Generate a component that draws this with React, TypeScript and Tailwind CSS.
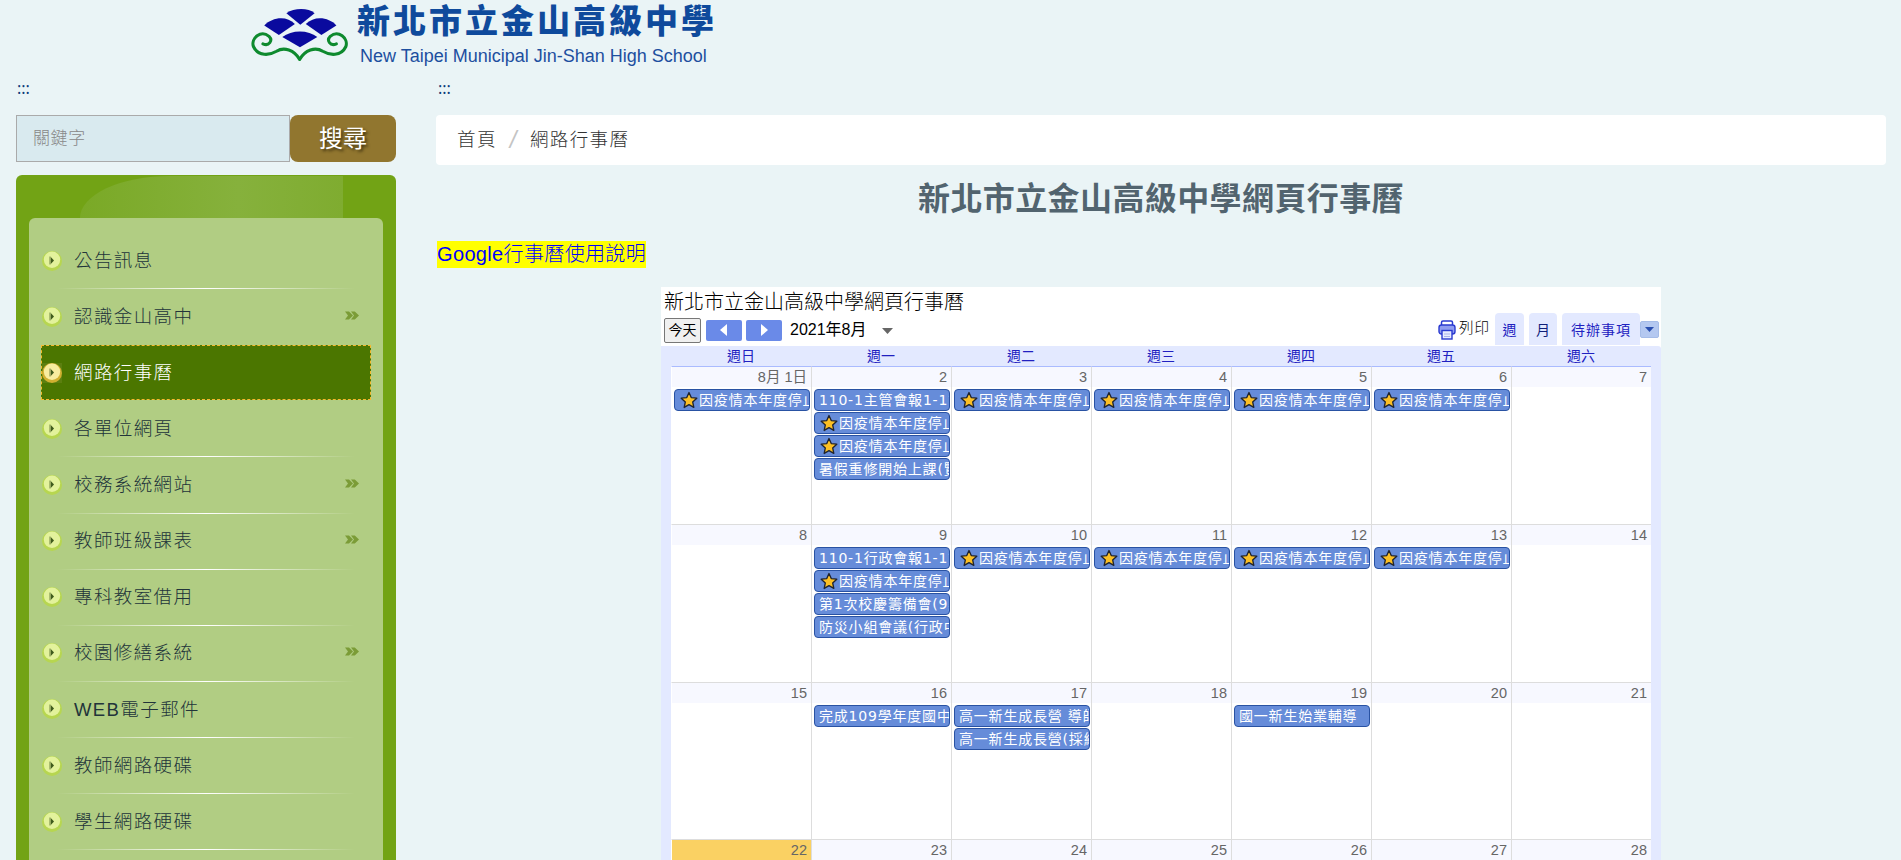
import React from "react";

const cjk = "font-['Liberation_Sans','Noto_Sans_CJK_TC',sans-serif]";
const evFont = "font-['DejaVu_Sans','Noto_Sans_CJK_TC',sans-serif]";

function Logo() {
  return (
    <div className="flex items-start pl-[250px] h-[72px]">
      <svg width="102" height="60" viewBox="0 0 300 168" className="mt-[7px] shrink-0">
        <path d="M107 14 C130 -2 172 -2 190 14 L148 48 Z" fill="#0a0a9e" />
        <path d="M42 50 C65 26 108 20 132 46 L85 78 Z" fill="#0a0a9e" />
        <path d="M164 46 C190 20 232 26 254 50 L210 78 Z" fill="#0a0a9e" />
        <path d="M95 84 C122 62 172 62 198 84 L147 114 Z" fill="#0a0a9e" />
        <path
          d="M146 150 C130 122 100 112 78 126 C58 138 24 142 10 112 C2 88 32 62 56 82 C68 94 56 112 38 104 M146 150 C162 122 192 112 214 126 C234 138 268 142 282 112 C290 88 260 62 236 82 C224 94 236 112 254 104"
          fill="none"
          stroke="#0e8a2e"
          strokeWidth="9"
          strokeLinecap="round"
        />
      </svg>
      <div className="ml-[5px] flex flex-col pt-[2px]">
        <div className={`${cjk} text-[33px] leading-[40px] font-black tracking-[3px] text-[#0f4a9c] whitespace-nowrap`}>新北市立金山高級中學</div>
        <div className="font-['Liberation_Sans',sans-serif] text-[18px] leading-[22px] text-[#1d4f9f] ml-[3px] mt-[3px] whitespace-nowrap">New Taipei Municipal Jin-Shan High School</div>
      </div>
    </div>
  );
}

function Bullet({ active }: { active?: boolean }) {
  const outer = active ? "#d0b030" : "#b7d650";
  const mid = active ? "#f8eda0" : "#e3f29c";
  return (
    <svg width="20" height="20" viewBox="0 0 20 20" className="shrink-0">
      {active && <rect x="0" y="0" width="20" height="20" fill="#5c7f10" />}
      <circle cx="10" cy="10" r="10" fill={outer} />
      <circle cx="10" cy="8.7" r="8.2" fill={mid} />
      <path d="M8.8 6 L12 9.5 L8.8 13 Z" fill="#3f5a1c" />
      <path d="M8 5.5 V13.5" stroke="#3f5a1c" strokeWidth="0.7" />
    </svg>
  );
}

function Chevron() {
  return (
    <svg width="14" height="9" viewBox="0 0 14 9" className="shrink-0 mb-[3px]">
      <path d="M0 0.5 H4 L8 4.5 L4 8.5 H0 L3 4.5 Z M6 0.5 H9.8 L14 4.5 L9.8 8.5 H6 L9 4.5 Z" fill="#7b9c37" />
    </svg>
  );
}

const menu: { t: string; more?: boolean; active?: boolean; noLine?: boolean }[] = [
  { t: "公告訊息" },
  { t: "認識金山高中", more: true, noLine: true },
  { t: "網路行事曆", active: true, noLine: true },
  { t: "各單位網頁" },
  { t: "校務系統網站", more: true },
  { t: "教師班級課表", more: true },
  { t: "專科教室借用" },
  { t: "校園修繕系統", more: true },
  { t: "WEB電子郵件" },
  { t: "教師網路硬碟" },
  { t: "學生網路硬碟" },
];

function Sidebar() {
  return (
    <div className="w-[380px] shrink-0">
      <div className="h-[43px] pt-[6px] text-[16px] leading-[20px] text-[#0a3a7a] pl-[1px]">:::</div>
      <div className="flex h-[47px]">
        <div className={`${cjk} font-light w-[274px] border border-[#aaaaaa] bg-[#d9eaef] pl-[16px] flex items-center text-[17px] tracking-[0.6px] text-[#888888]`}>關鍵字</div>
        <div className={`${cjk} flex-1 rounded-[8px] bg-[#91762f] text-white text-[24px] flex items-center justify-center [text-shadow:2px_2px_3px_#3f3210]`}>搜尋</div>
      </div>
      <div className="relative mt-[13px] rounded-[6px] bg-[#72a315] px-[13px] pt-[43px]">
        <div className="absolute left-[64px] top-[1px] w-[263px] h-[42px] rounded-tl-[90px_42px] bg-[linear-gradient(90deg,#7aa926,#86b13c_60%,#7fac30)]" />
        <div className="relative rounded-[6px] bg-[#b1cd83] pt-[15px] px-[12px] pb-[40px]">
          {menu.map((m) => (
            <div key={m.t}>
              <div
                className={`${cjk} font-light flex items-center h-[55.12px] text-[18.5px] tracking-[1.4px] ${
                  m.active ? "border border-dashed border-[#f5b82e] bg-[#4b7600] text-white" : "border border-transparent text-[#22343a]"
                }`}
              >
                <Bullet active={m.active} />
                <span className="ml-[12px] flex-1">{m.t}</span>
                {m.more && <span className="mr-[11px] flex"><Chevron /></span>}
              </div>
              <div
                className={`h-[1px] mx-[16px] ${
                  m.noLine ? "" : "bg-[linear-gradient(90deg,transparent,#ffffff_50%,transparent)]"
                }`}
              />
            </div>
          ))}
        </div>
      </div>
    </div>
  );
}

function Star() {
  return (
    <svg width="18" height="18" viewBox="0 0 24 24" className="shrink-0 mr-[1px]">
      <path
        d="M12 2 L15 8.8 L22.4 9.6 L16.9 14.6 L18.4 21.9 L12 18.2 L5.6 21.9 L7.1 14.6 L1.6 9.6 L9 8.8 Z"
        fill="#fbbf24"
        stroke="#1f2430"
        strokeWidth="1.8"
        strokeLinejoin="round"
      />
    </svg>
  );
}

type Ev = { t: string; star?: boolean };
const S: Ev = { t: "因疫情本年度停止上班", star: true };

const weeks: { d: string; ev?: Ev[]; today?: boolean }[][] = [
  [
    { d: "8月 1日", ev: [S] },
    { d: "2", ev: [{ t: "110-1主管會報1-1節" }, S, S, { t: "暑假重修開始上課(覽" }] },
    { d: "3", ev: [S] },
    { d: "4", ev: [S] },
    { d: "5", ev: [S] },
    { d: "6", ev: [S] },
    { d: "7" },
  ],
  [
    { d: "8" },
    { d: "9", ev: [{ t: "110-1行政會報1-1節" }, S, { t: "第1次校慶籌備會(9點" }, { t: "防災小組會議(行政中心" }] },
    { d: "10", ev: [S] },
    { d: "11", ev: [S] },
    { d: "12", ev: [S] },
    { d: "13", ev: [S] },
    { d: "14" },
  ],
  [
    { d: "15" },
    { d: "16", ev: [{ t: "完成109學年度國中" }] },
    { d: "17", ev: [{ t: "高一新生成長營 導師" }, { t: "高一新生成長營(採線" }] },
    { d: "18" },
    { d: "19", ev: [{ t: "國一新生始業輔導" }] },
    { d: "20" },
    { d: "21" },
  ],
  [
    { d: "22", today: true },
    { d: "23" },
    { d: "24" },
    { d: "25" },
    { d: "26" },
    { d: "27" },
    { d: "28" },
  ],
];

const rowH = ["h-[158px]", "h-[158px]", "h-[157px]", "h-[120px]"];

function Calendar() {
  return (
    <div className={`${cjk} w-[1000px] mx-auto bg-white h-[580px] overflow-hidden`}>
      <div className="h-[59px] relative">
        <div className="pl-[3px] pt-[2px] font-light text-[20px] leading-[26px] text-black">新北市立金山高級中學網頁行事曆</div>
        <div className="flex items-center pl-[3px] h-[32px] -mt-[2px]">
          <div className="w-[37px] h-[25px] mt-[2px] rounded-[2px] border border-[#777777] bg-[#f0f0f0] text-[14px] flex items-center justify-center text-black">今天</div>
          <div className="ml-[5px] mt-[2px] w-[36px] h-[21px] rounded-[2px] bg-[#6a8ae8] flex items-center justify-center">
            <svg width="8" height="12" viewBox="0 0 8 12"><path d="M7 0 L0 6 L7 12 Z" fill="#fff" /></svg>
          </div>
          <div className="ml-[4px] mt-[2px] w-[36px] h-[21px] rounded-[2px] bg-[#6a8ae8] flex items-center justify-center">
            <svg width="8" height="12" viewBox="0 0 8 12"><path d="M1 0 L8 6 L1 12 Z" fill="#fff" /></svg>
          </div>
          <span className="ml-[8px] mt-[2px] text-[16px] text-black">2021年8月</span>
          <svg width="11" height="6" viewBox="0 0 11 6" className="ml-[15px] mt-[3px]"><path d="M0 0 H11 L5.5 6 Z" fill="#666" /></svg>
          <div className="ml-auto flex items-end h-[32px] pr-[2px]">
            <svg width="18" height="20" viewBox="0 0 18 20" className="mb-[5px]">
              <rect x="3.5" y="1" width="11" height="5" rx="1.5" fill="#fff" stroke="#2a3ad0" strokeWidth="1.5" />
              <rect x="1" y="5" width="16" height="9" rx="2.5" fill="#8f9cf0" stroke="#2a3ad0" strokeWidth="1.4" />
              <rect x="4" y="10.5" width="10" height="8.5" fill="#e8ecff" stroke="#2a3ad0" strokeWidth="1.4" />
              <path d="M6 14 H12 M6 16.5 H12" stroke="#aab2e8" strokeWidth="1" />
            </svg>
            <span className="ml-[3px] mb-[5px] text-[14.5px] tracking-[1px] font-light text-black">列印</span>
            <div className="ml-[5px] w-[29px] h-[32px] pt-[3px] rounded-t-[4px] bg-[#e3e9ff] text-[14px] text-[#2020c0] flex items-center justify-center">週</div>
            <div className="ml-[5px] w-[28px] h-[32px] pt-[3px] rounded-t-[4px] bg-[#e3e9ff] text-[14px] text-[#10207a] flex items-center justify-center">月</div>
            <div className="ml-[5px] w-[78px] h-[32px] pt-[3px] rounded-t-[4px] bg-[#e3e9ff] text-[14px] tracking-[1px] text-[#2020c0] flex items-center justify-center">待辦事項</div>
            <div className="w-[19px] h-[17px] mb-[7px] rounded-[2px] border border-[#a5bce8] bg-[#b4c8f0] flex items-center justify-center">
              <svg width="9" height="5" viewBox="0 0 9 5"><path d="M0 0 H9 L4.5 5 Z" fill="#2a4fb0" /></svg>
            </div>
          </div>
        </div>
      </div>
      <div className="bg-[#e3e9ff] rounded-tr-[3px] px-[10px] pb-[10px]">
        <div className="grid grid-cols-7 h-[20px]">
          {["週日", "週一", "週二", "週三", "週四", "週五", "週六"].map((w) => (
            <div key={w} className="text-center text-[14px] leading-[21px] text-[#2020c0]">{w}</div>
          ))}
        </div>
        {weeks.map((wk, i) => (
          <div key={i} className={`grid grid-cols-7 bg-white ${rowH[i]}`}>
            {wk.map((c, j) => (
              <div
                key={j}
                className={`border-l min-w-0 ${j === 0 ? "border-l-transparent" : "border-l-[#dddddd]"} border-t ${
                  i === 0 ? "border-t-[#aabbff]" : "border-t-[#dddddd]"
                }`}
              >
                <div
                  className={`h-[20px] pr-[4px] text-right text-[14.5px] leading-[20px] text-[#666666] ${
                    c.today ? "bg-[#fad163]" : "bg-[#f7f8ff]"
                  }`}
                >
                  {c.d}
                </div>
                <div className="pt-[2px] pl-[2px] flex flex-col gap-[1px]">
                  {(c.ev || []).map((e, k) => (
                    <div
                      key={k}
                      className={`${evFont} flex items-center w-[136px] h-[22px] rounded-[4px] border border-[#2952a3] bg-[#668cd9] text-white text-[14px] tracking-[0.8px] overflow-hidden whitespace-nowrap ${
                        e.star ? "pl-[5px]" : "pl-[4px]"
                      }`}
                    >
                      {e.star && <span className="flex"><Star /></span>}
                      <span>{e.t}</span>
                    </div>
                  ))}
                </div>
              </div>
            ))}
          </div>
        ))}
      </div>
    </div>
  );
}

function Main() {
  return (
    <div className="flex-1 min-w-0">
      <div className="h-[43px] pt-[6px] text-[16px] leading-[20px] text-[#0a3a7a] pl-[2px]">:::</div>
      <div className={`${cjk} font-light h-[50px] rounded-[4px] bg-white flex items-center pl-[21px] text-[18.5px] tracking-[1.4px] text-[#333333]`}>
        <span>首頁</span>
        <span className="ml-[13px] mr-[12px] text-[24px] font-light text-[#c4c4c4] italic">/</span>
        <span>網路行事曆</span>
      </div>
      <h1 className={`${cjk} mt-[11px] text-center text-[32px] leading-[46px] font-bold tracking-[0.4px] text-[#52646f]`}>新北市立金山高級中學網頁行事曆</h1>
      <div className="mt-[19px] pl-[1px] h-[46px]">
        <span className={`${cjk} font-light inline-block bg-[#ffff00] text-[#0000ff] text-[20px] tracking-[0.35px] leading-[27px]`}>Google行事曆使用說明</span>
      </div>
      <Calendar />
    </div>
  );
}

export default function App() {
  return (
    <div className="h-[860px] overflow-hidden bg-[#eaf4f6]">
      <Logo />
      <div className="flex gap-[40px] pl-[16px] pr-[15px]">
        <Sidebar />
        <Main />
      </div>
    </div>
  );
}
